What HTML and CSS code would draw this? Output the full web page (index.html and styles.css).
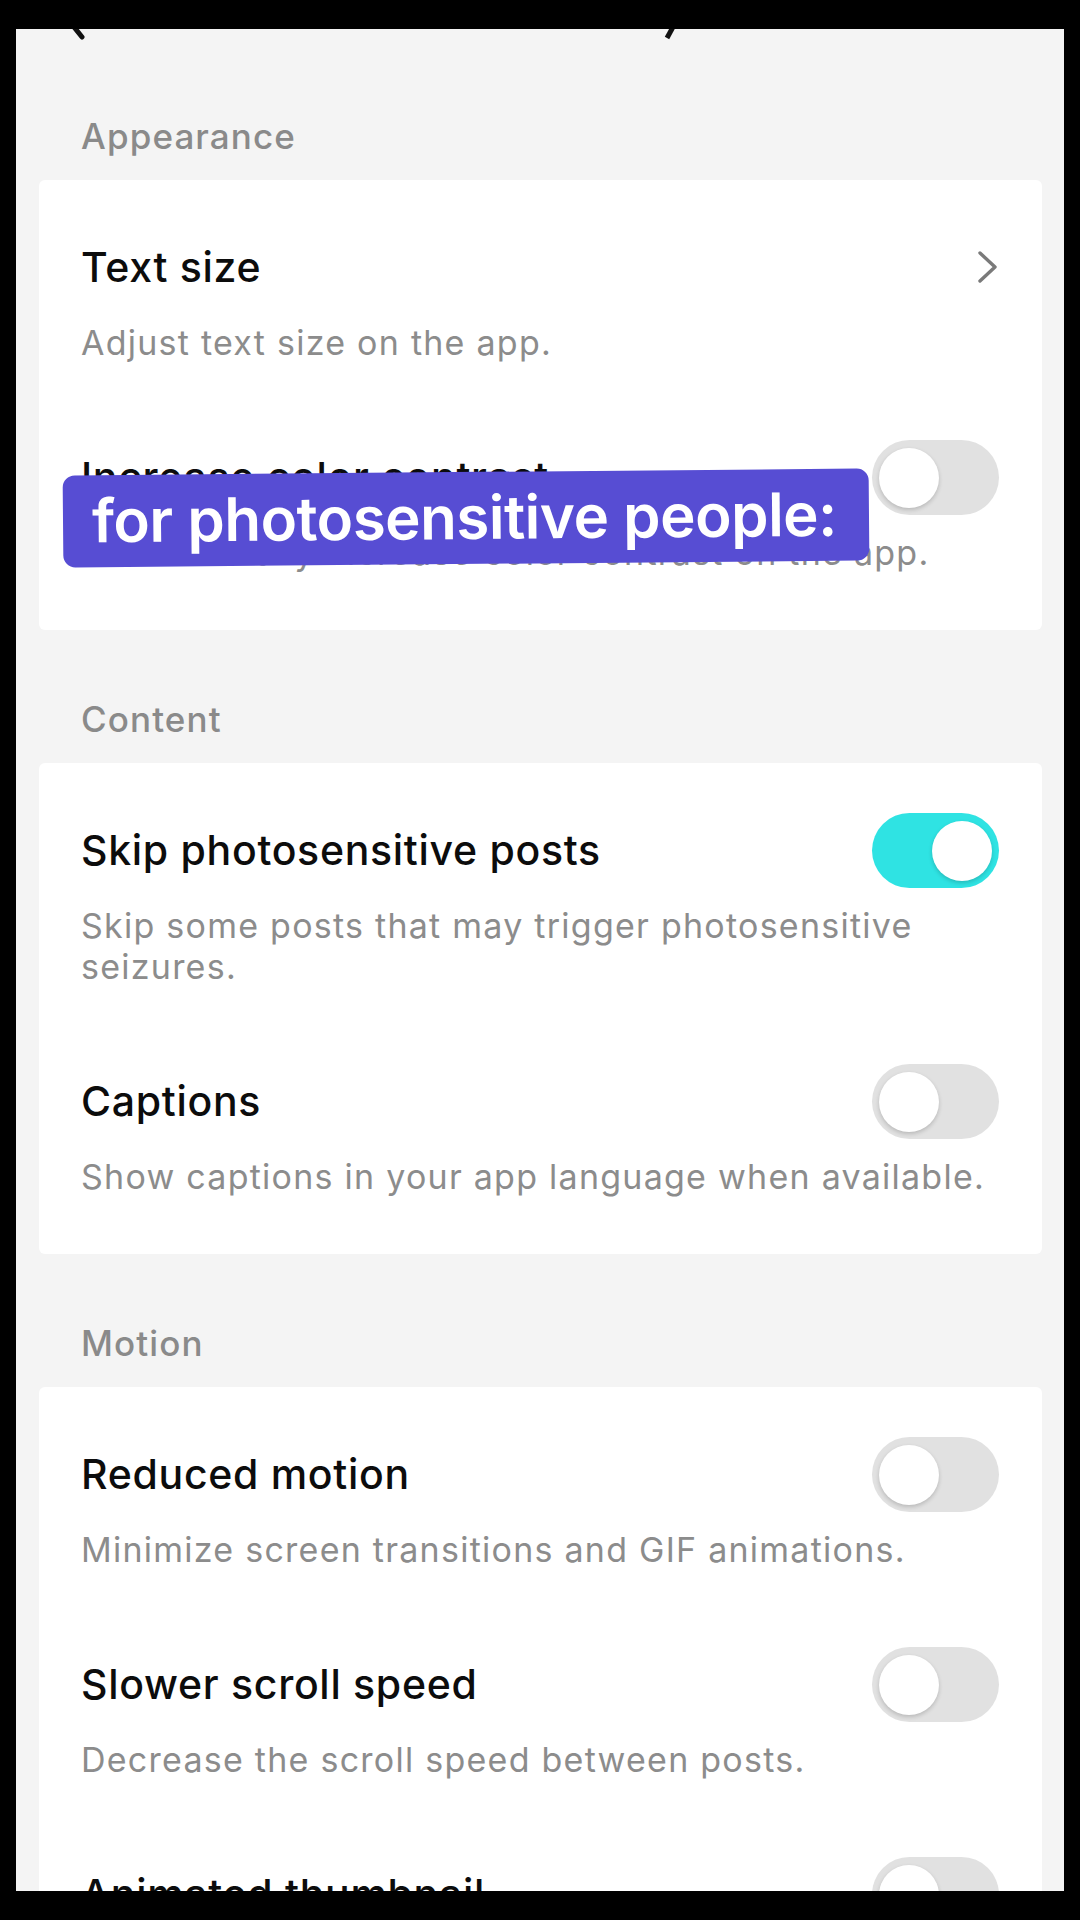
FILE: index.html
```html
<!DOCTYPE html>
<html lang="en">
<head>
<meta charset="utf-8">
<title>Accessibility</title>
<link rel="stylesheet" href="styles.css">
</head>
<body>
<div class="frame">
  <div class="screen">
    <svg class="cutoff" width="1048" height="12" viewBox="0 0 1048 12">
      <path d="M58 -2 L66 8" stroke="#111" stroke-width="5" stroke-linecap="round" fill="none"/>
      <path d="M657 -2 L651 9" stroke="#111" stroke-width="5" stroke-linecap="butt" fill="none"/>
    </svg>

    <section class="group first">
      <h2 class="group-title">Appearance</h2>
      <div class="card">
        <div class="row">
          <div class="row-head">
            <span class="row-title">Text size</span>
            <svg class="chev" width="22" height="32" viewBox="0 0 22 32"><path d="M3 2 L18 16 L3 30" stroke="#7a7a7a" stroke-width="3.4" fill="none" stroke-linecap="round" stroke-linejoin="round"/></svg>
          </div>
          <p class="row-desc">Adjust text size on the app.</p>
        </div>
        <div class="row">
          <div class="row-head">
            <span class="row-title">Increase color contrast</span>
            <span class="toggle"><span class="knob"></span></span>
          </div>
          <p class="row-desc">Automatically increase color contrast on the app.</p>
        </div>
      </div>
    </section>

    <section class="group">
      <h2 class="group-title">Content</h2>
      <div class="card">
        <div class="row">
          <div class="row-head">
            <span class="row-title">Skip photosensitive posts</span>
            <span class="toggle on"><span class="knob"></span></span>
          </div>
          <p class="row-desc">Skip some posts that may trigger photosensitive seizures.</p>
        </div>
        <div class="row">
          <div class="row-head">
            <span class="row-title">Captions</span>
            <span class="toggle"><span class="knob"></span></span>
          </div>
          <p class="row-desc">Show captions in your app language when available.</p>
        </div>
      </div>
    </section>

    <section class="group">
      <h2 class="group-title">Motion</h2>
      <div class="card">
        <div class="row">
          <div class="row-head">
            <span class="row-title">Reduced motion</span>
            <span class="toggle"><span class="knob"></span></span>
          </div>
          <p class="row-desc">Minimize screen transitions and GIF animations.</p>
        </div>
        <div class="row">
          <div class="row-head">
            <span class="row-title">Slower scroll speed</span>
            <span class="toggle"><span class="knob"></span></span>
          </div>
          <p class="row-desc">Decrease the scroll speed between posts.</p>
        </div>
        <div class="row">
          <div class="row-head">
            <span class="row-title">Animated thumbnail</span>
            <span class="toggle"><span class="knob"></span></span>
          </div>
        </div>
      </div>
    </section>

    <div class="caption">for photosensitive people:</div>
  </div>
</div>
</body>
</html>
```

FILE: styles.css
```css
* { box-sizing: border-box; }

html, body {
  margin: 0;
  padding: 0;
  background: #000;
}

body {
  width: 1080px;
  height: 1920px;
  overflow: hidden;
  font-family: Inter, "Liberation Sans", sans-serif;
}

.frame {
  width: 1080px;
  height: 1920px;
  padding: 29px 16px 29px 16px;
  background: #000;
}

.screen {
  position: relative;
  width: 1048px;
  height: 1862px;
  background: #f4f4f4;
  overflow: hidden;
  display: flex;
  flex-direction: column;
}

.cutoff {
  display: block;
  flex: none;
}

.group {
  display: flex;
  flex-direction: column;
  margin-top: 68px;
}

.group.first {
  margin-top: 74px;
}

.group-title {
  margin: 0 0 23px 65px;
  font-size: 35px;
  line-height: 42px;
  font-weight: 500;
  letter-spacing: 1.1px;
  color: #8a8a8a;
}

.card {
  margin: 0 22px 0 23px;
  background: #fff;
  border-radius: 6px;
  padding: 63px 43px 57px 42px;
  display: flex;
  flex-direction: column;
  gap: 90px;
}

.row {
  display: flex;
  flex-direction: column;
}

.row-head {
  display: flex;
  align-items: center;
  justify-content: space-between;
  height: 48px;
}

.row-title {
  font-size: 41px;
  line-height: 48px;
  font-weight: 500;
  letter-spacing: 0.7px;
  color: #0c0c0c;
}

.row-desc {
  margin: 31px 0 0 0;
  font-size: 34px;
  line-height: 41px;
  font-weight: 400;
  letter-spacing: 1.25px;
  color: #8c8c8c;
  max-width: 910px;
}

.chev {
  display: block;
}

.toggle {
  flex: none;
  width: 127px;
  height: 75px;
  border-radius: 38px;
  background: #e1e1e1;
  padding: 8px 7px;
  display: flex;
  justify-content: flex-start;
}

.toggle.on {
  background: #2fe3e3;
  justify-content: flex-end;
}

.knob {
  width: 60px;
  height: 60px;
  border-radius: 50%;
  background: #fff;
  box-shadow: 0 2px 4px rgba(0, 0, 0, 0.18);
}

.caption {
  position: absolute;
  left: 47px;
  top: 443px;
  width: 806px;
  height: 92px;
  border-radius: 12px;
  background: #574dd3;
  color: #fff;
  font-family: Inter, "Open Sans", sans-serif;
  font-weight: 600;
  font-size: 60px;
  letter-spacing: -0.5px;
  line-height: 90px;
  padding-left: 29px;
  transform: rotate(-0.5deg);
  white-space: nowrap;
}
```
